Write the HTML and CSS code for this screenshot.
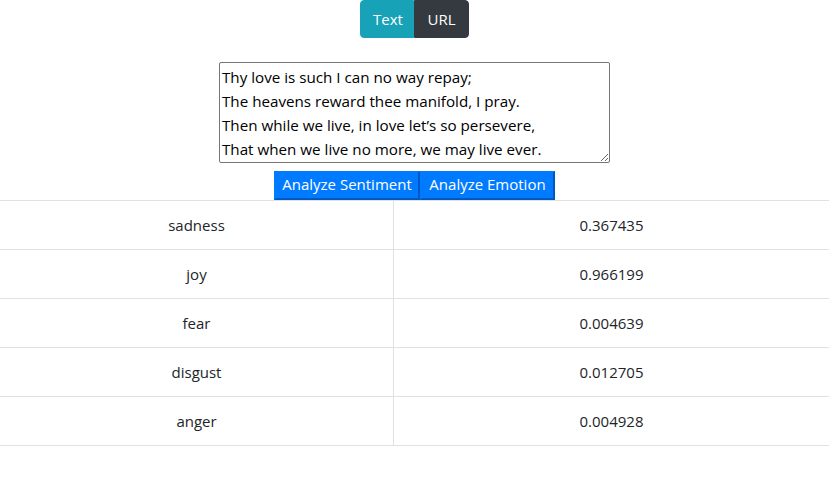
FILE: index.html
```html
<!DOCTYPE html>
<html>
<head>
<meta charset="utf-8">
<link rel="stylesheet" href="styles.css">
</head>
<body>
<div class="toggle">
  <button class="tab tab-text">Text</button><button class="tab tab-url">URL</button>
</div>
<div class="form">
  <textarea class="input" rows="4">Thy love is such I can no way repay;
The heavens reward thee manifold, I pray.
Then while we live, in love let’s so persevere,
That when we live no more, we may live ever.</textarea>
  <div class="actions">
    <button class="act">Analyze Sentiment</button><button class="act">Analyze Emotion</button>
  </div>
</div>
<table class="results">
  <tr><td class="label">sadness</td><td class="value">0.367435</td></tr>
  <tr><td class="label">joy</td><td class="value">0.966199</td></tr>
  <tr><td class="label">fear</td><td class="value">0.004639</td></tr>
  <tr><td class="label">disgust</td><td class="value">0.012705</td></tr>
  <tr><td class="label">anger</td><td class="value">0.004928</td></tr>
</table>
</body>
</html>
```
FILE: styles.css
```css
html, body {
  margin: 0;
  padding: 0;
  background: #fff;
  font-family: "Open Sans", "Noto Sans", sans-serif;
  font-size: 15px;
  color: #212529;
}
.toggle {
  display: flex;
  justify-content: center;
}
.tab {
  font-family: inherit;
  font-size: 15px;
  line-height: 24px;
  color: #fff;
  border: 1px solid transparent;
  padding: 6px 12px;
  margin: 0;
  height: 38px;
}
.tab-text {
  background: #17a2b8;
  border-color: #17a2b8;
  border-radius: 4px 0 0 4px;
  width: 54px;
}
.tab-url {
  background: #343a40;
  border-color: #343a40;
  border-radius: 0 4px 4px 0;
  width: 55px;
}
.form {
  display: flex;
  flex-direction: column;
  align-items: center;
  margin-top: 24px;
}
.input {
  display: block;
  box-sizing: border-box;
  width: 391px;
  height: 101px;
  margin: 0 0 8px 0;
  padding: 2px 2px;
  border: 1px solid #767676;
  border-radius: 2px;
  font-family: inherit;
  font-size: 15.2px;
  line-height: 24px;
  color: #000;
  resize: both;
  overflow: hidden;
}
.actions {
  display: flex;
}
.act {
  box-sizing: border-box;
  height: 29px;
  margin: 0;
  padding: 0 2px 2px;
  white-space: nowrap;
  font-family: inherit;
  font-size: 15px;
  line-height: 23px;
  color: #fff;
  background: #007bff;
  border: 2px solid #007bff;
  border-right-color: #0057c2;
  border-bottom-color: #0057c2;
}
.act:first-child { width: 146px; }
.act:last-child { width: 135px; }
.results {
  width: 100%;
  border-collapse: collapse;
}
.results td {
  border-top: 1px solid #dee2e6;
  border-bottom: 1px solid #dee2e6;
  padding: 12px;
  line-height: 24px;
  text-align: center;
}
.results .label {
  width: 369px;
}
.results .value {
  border-left: 1px solid #dee2e6;
}
```
